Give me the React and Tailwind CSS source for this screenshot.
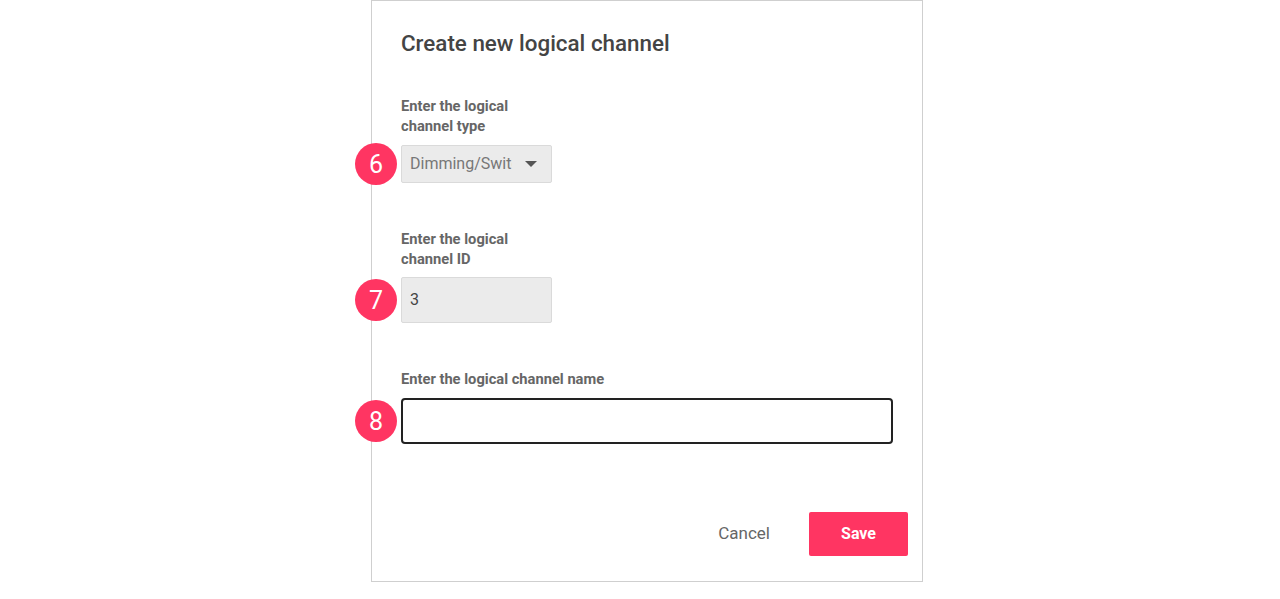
import React from 'react';

const Badge = ({ n }) => (
    <div className="absolute left-[-46px] top-1/2 -translate-y-1/2 w-[42px] h-[42px] rounded-full bg-[#ff3562] text-white text-[25px] leading-none flex items-center justify-center">
        {n}
    </div>
);

const App = () => {
    return (
        <div className="w-[1280px] h-[599px] bg-white" style={{ fontFamily: 'Roboto, "Liberation Sans", sans-serif' }}>
            <div className="ml-[371px] w-[552px] h-[582px] border border-[#cfcfcf] bg-white flex flex-col">
                <div className="px-[29px] pt-[28px]">
                    <h1 className="text-[22.4px] leading-7 font-medium text-[#444]">Create new logical channel</h1>

                    {/* channel type */}
                    <p className="mt-[39px] w-[151px] text-[14.7px] leading-5 font-bold text-[#666]">Enter the logical channel type</p>
                    <div className="relative mt-[9px] w-[151px]">
                        <Badge n="6" />
                        <div className="h-[38px] bg-[#ebebeb] border border-[#dadada] rounded-[2px] flex items-center pl-[8px] pr-[14px]">
                            <span className="w-[102px] overflow-hidden whitespace-nowrap text-[16px] text-[#777]">Dimming/Switching</span>
                            <svg className="ml-auto" width="12" height="6" viewBox="0 0 12 6">
                                <path d="M0 0 L12 0 L6 6 Z" fill="#555" />
                            </svg>
                        </div>
                    </div>

                    {/* channel id */}
                    <p className="mt-[46px] w-[151px] text-[14.7px] leading-5 font-bold text-[#666]">Enter the logical channel ID</p>
                    <div className="relative mt-[8px] w-[151px]">
                        <Badge n="7" />
                        <div className="h-[46px] bg-[#ebebeb] border border-[#dadada] rounded-[2px] flex items-center pl-[8px] text-[16px] text-[#444]">
                            3
                        </div>
                    </div>

                    {/* channel name */}
                    <p className="mt-[46px] text-[14.7px] leading-5 font-bold text-[#666]">Enter the logical channel name</p>
                    <div className="relative mt-[9px]">
                        <Badge n="8" />
                        <div className="h-[46px] bg-white border-2 border-[#222] rounded-[4px]"></div>
                    </div>
                </div>

                <div className="mt-[68px] pr-[14px] flex items-center justify-end gap-[39px]">
                    <span className="text-[17px] text-[#666]">Cancel</span>
                    <div className="w-[99px] h-[44px] bg-[#ff3562] rounded-[2px] flex items-center justify-center text-white text-[16px] font-bold">Save</div>
                </div>
            </div>
        </div>
    );
};

export default App;
